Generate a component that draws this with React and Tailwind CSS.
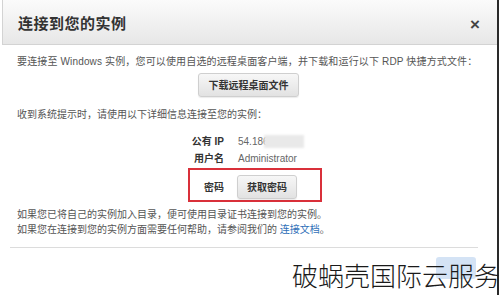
import React from 'react';

const font = { fontFamily: '"Liberation Sans", "Noto Sans CJK SC", sans-serif' };

const GrayButton = ({ children, className = '' }) => (
  <button
    className={`h-[24px] rounded-[3px] border border-[#cfcfcf] bg-gradient-to-b from-[#f7f7f7] to-[#e2e2e2] text-[10px] font-bold text-[#333] shadow-[0_1px_1px_rgba(0,0,0,0.08)] ${className}`}
  >
    {children}
  </button>
);

const InfoRow = ({ label, children }) => (
  <div className="flex items-center h-[17px]">
    <div className="w-[36px] text-right text-[10px] font-bold text-[#333]">{label}</div>
    <div className="ml-[14px] text-[10px] text-[#666] flex items-center">{children}</div>
  </div>
);

export default function App() {
  return (
    <div className="relative w-[500px] h-[295px] overflow-hidden bg-white flex" style={font}>
      <div className="w-[497px] flex flex-col">
        {/* header */}
        <div className="h-[45px] pt-[5px] ml-[2px] flex items-center justify-between pl-[15px] pr-[17px] bg-gradient-to-b from-[#fbfbfb] to-[#e7e7e7] border-b border-l border-[#d3d3d3]">
          <h1 className="text-[15px] font-bold text-[#333] tracking-[0.5px]">连接到您的实例</h1>
          <span className="text-[17px] font-bold text-[#444] leading-none">×</span>
        </div>

        {/* body */}
        <div className="pt-[9px] px-[17px] text-[10px] text-[#555]">
          <p className="leading-[16px] tracking-[0.15px]">
            要连接至 Windows 实例，您可以使用自选的远程桌面客户端，并下载和运行以下 RDP 快捷方式文件：
          </p>
          <div className="mt-[3px] flex justify-center">
            <GrayButton className="w-[101px]">下载远程桌面文件</GrayButton>
          </div>
          <p className="mt-[10px] leading-[16px]">收到系统提示时，请使用以下详细信息连接至您的实例：</p>

          <div className="mt-[10px] ml-[171px] w-[134px]">
            <InfoRow label="公有 IP">
              <span>54.186</span>
              <span className="inline-block w-[40px] h-[13px] -ml-[5px] bg-[#e9e9e9] blur-[1px]" />
            </InfoRow>
            <InfoRow label="用户名">Administrator</InfoRow>
            <div className="mt-[1px] border-2 border-[#d9303a] pt-[5px] pb-[1px] flex items-center">
              <div className="w-[34px] text-right text-[10px] font-bold text-[#333]">密码</div>
              <GrayButton className="ml-[13px] w-[60px]">获取密码</GrayButton>
            </div>
          </div>

          <p className="mt-[5px] leading-[15px]">如果您已将自己的实例加入目录，便可使用目录证书连接到您的实例。</p>
          <p className="leading-[15px]">
            如果您在连接到您的实例方面需要任何帮助，请参阅我们的 <span className="text-[#2f6fb8]">连接文档</span>。
          </p>
        </div>
        <div className="mt-[10px] ml-[10px] w-[468px] h-px bg-[#dcdcdc]" />
      </div>
      <div className="w-[2px] h-full bg-[#2a2a2a]" />

      {/* faint source watermark */}
      <div className="absolute left-[436px] top-[257px] w-[40px] h-[22px] rounded-[3px] bg-[#a9c8ec] opacity-50" />

      {/* overlay caption */}
      <div
        className="absolute left-[292px] top-[262px] text-[26px] leading-none text-[#1a1a1a] font-light whitespace-nowrap"
        style={{ fontFamily: '"Noto Sans CJK SC", sans-serif' }}
      >
        破蜗壳国际云服务
      </div>
    </div>
  );
}
